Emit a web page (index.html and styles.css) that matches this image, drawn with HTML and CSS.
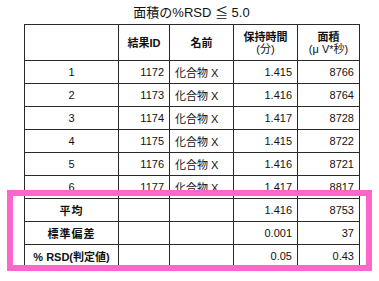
FILE: index.html
```html
<!DOCTYPE html>
<html lang="ja">
<head>
  <meta charset="utf-8">
  <title>面積の%RSD</title>
  <link rel="stylesheet" href="styles.css">
</head>
<body>
  <div class="sheet">
    <div class="title">面積の%RSD ≦ 5.0</div>
    <table class="result">
      <colgroup>
        <col class="c-no">
        <col class="c-id">
        <col class="c-name">
        <col class="c-time">
        <col class="c-area">
      </colgroup>
      <tr class="head">
        <th></th>
        <th>結果ID</th>
        <th>名前</th>
        <th>保持時間<br><span class="unit">(分)</span></th>
        <th>面積<br><span class="unit">(μ V*秒)</span></th>
      </tr>
      <tr><td class="mid">1</td><td class="num">1172</td><td class="name">化合物 X</td><td class="num">1.415</td><td class="num">8766</td></tr>
      <tr><td class="mid">2</td><td class="num">1173</td><td class="name">化合物 X</td><td class="num">1.416</td><td class="num">8764</td></tr>
      <tr><td class="mid">3</td><td class="num">1174</td><td class="name">化合物 X</td><td class="num">1.417</td><td class="num">8728</td></tr>
      <tr><td class="mid">4</td><td class="num">1175</td><td class="name">化合物 X</td><td class="num">1.415</td><td class="num">8722</td></tr>
      <tr><td class="mid">5</td><td class="num">1176</td><td class="name">化合物 X</td><td class="num">1.416</td><td class="num">8721</td></tr>
      <tr><td class="mid">6</td><td class="num">1177</td><td class="name">化合物 X</td><td class="num">1.417</td><td class="num">8817</td></tr>
      <tr><td class="mid label">平均</td><td></td><td></td><td class="num">1.416</td><td class="num">8753</td></tr>
      <tr><td class="mid label">標準偏差</td><td></td><td></td><td class="num">0.001</td><td class="num">37</td></tr>
      <tr><td class="mid label tight">% RSD(判定値)</td><td></td><td></td><td class="num">0.05</td><td class="num">0.43</td></tr>
    </table>
    <div class="highlight"></div>
  </div>
</body>
</html>
```

FILE: styles.css
```css
* {
  box-sizing: border-box;
  margin: 0;
}

body {
  background-color: white;
  font-family: "Liberation Sans", "Noto Sans CJK JP", sans-serif;
  color: #111;
}

.sheet {
  position: relative;
  width: 379px;
  height: 281px;
  padding-left: 24px;
}

/* title above the table */
.title {
  width: 335px;
  height: 24px;
  padding-top: 4px;
  text-align: center;
  font-size: 13px;
  line-height: 17px;
}

.result {
  border-collapse: collapse;
  table-layout: fixed;
  width: 335px;
  font-size: 11px;
}

.c-no { width: 94px; }
.c-id { width: 51px; }
.c-name { width: 64px; }
.c-time { width: 64px; }
.c-area { width: 62px; }

.result th,
.result td {
  border: 1px solid #2a2a2a;
  height: 23px;
  padding: 0 5px;
  white-space: nowrap;
  font-weight: normal;
}

.result .head th {
  height: 36px;
  text-align: center;
  line-height: 12px;
  vertical-align: middle;
  font-weight: bold;
}

.unit {
  font-size: 11px;
  font-weight: normal;
}

.mid {
  text-align: center;
}

.num {
  text-align: right;
}

.name {
  text-align: left;
  padding-left: 3px;
}

.result td.label {
  font-weight: bold;
  letter-spacing: 1px;
}

.result td.tight {
  letter-spacing: 0;
}

/* pink frame over the summary rows */
.highlight {
  position: absolute;
  left: 7px;
  top: 190px;
  width: 365px;
  height: 81px;
  border: 6px solid #ff66cc;
}
```
